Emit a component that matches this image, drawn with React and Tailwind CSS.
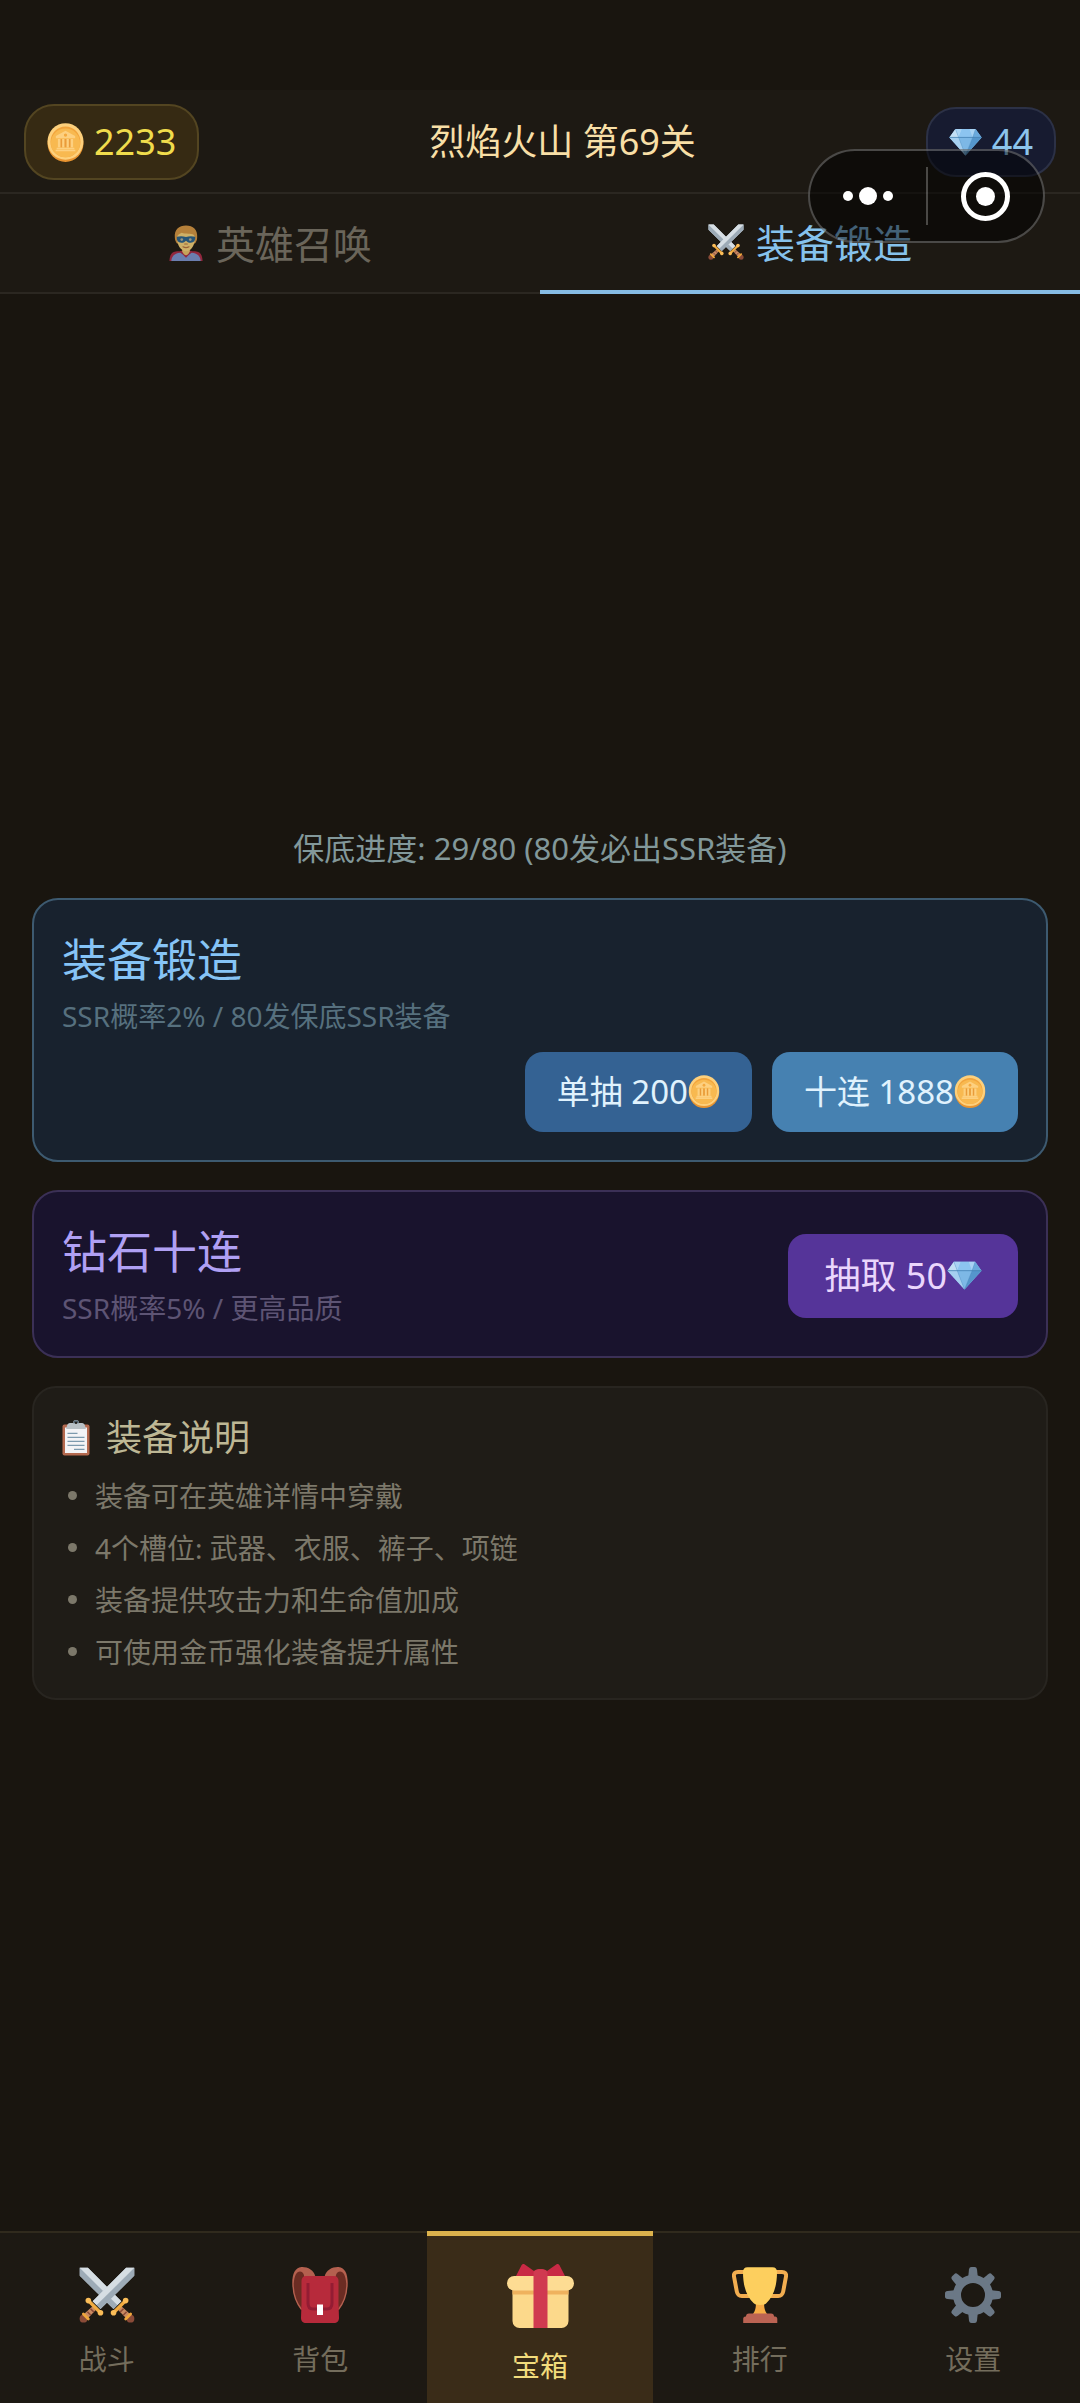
import React, { useState } from "react";

function CoinIcon({ className }) {
  return (
    <svg viewBox="0 0 36 38" className={className} aria-hidden="true">
      <ellipse cx="18" cy="20" rx="17.5" ry="18" fill="#e89430" />
      <ellipse cx="18" cy="18" rx="17.5" ry="17.8" fill="#fdd07c" />
      <ellipse cx="18" cy="18.4" rx="14.6" ry="15" fill="#f2a43c" />
      <ellipse cx="18" cy="19.4" rx="14.2" ry="14" fill="#f8b950" />
      <path d="M18 7.5 8.6 12.6v2.2h18.8v-2.2z" fill="#fdd080" />
      <circle cx="18" cy="11.8" r="1.6" fill="#f4a83e" />
      <path
        d="M10.6 15.6h2.6v8h-2.6zM14.7 15.6h2.4v8h-2.4zM18.9 15.6h2.4v8h-2.4zM22.8 15.6h2.6v8h-2.6zM9.4 24h17.2v1.6H9.4zM8.4 26h19.2v1.6H8.4z"
        fill="#fdd080"
      />
      <path d="M13.2 15.6h1.5v8h-1.5zM17.1 15.6h1.8v8h-1.8zM21.3 15.6h1.5v8h-1.5z" fill="#e99b3a" />
    </svg>
  );
}

function DiamondIcon({ className }) {
  return (
    <svg viewBox="0 0 36 30" className={className} aria-hidden="true">
      <path d="M7 .8h22L35.6 10 18 29.6.4 10z" fill="#8cc4ee" />
      <path d="M7 .8 10.5 10H.4z" fill="#c3dff5" />
      <path d="M7 .8h7.2L10.5 10z" fill="#a9d3f4" />
      <path d="M14.2.8h8.2l3.4 9.2H10.5z" fill="#8cc4f0" />
      <path d="M22.4.8H29L25.8 10z" fill="#a9d3f4" />
      <path d="M29 .8 35.6 10h-9.8z" fill="#6aa9dc" />
      <path d="M.4 10h10.1L18 29.6z" fill="#a5cff0" />
      <path d="M10.5 10h15.3L18 29.6z" fill="#7db8e6" />
      <path d="M25.8 10h9.8L18 29.6z" fill="#5596cc" />
      <path d="M.4 10h35.2" fill="none" stroke="#3f7cae" strokeWidth=".8" />
      <path d="M7 .8 10.500 10 18 29.600 25.800 10 29 .8" fill="none" stroke="#3f7cae" strokeWidth=".3" />
    </svg>
  );
}

function Sword() {
  return (
    <g>
      <path d="M35.5.5v5.200L13.800 27l-5-5L30.300.5z" fill="#c6d0d8" />
      <path d="M35.5.5v5.200L13.800 27l-2.500-2.500z" fill="#9dabb7" />
      <path d="M30.300.5h5.200L11.300 24.500 8.800 22z" fill="#d6dee4" />
      <path d="m8.600 25.400 2.200 2.200-5.400 5.600-2.600-2.600z" fill="#c98a62" />
      <path d="m7.400 26.800 2.200 2.200M5.400 28.800l2.200 2.200" stroke="#8a4b38" strokeWidth="1" />
      <circle cx="2.900" cy="33.200" r="2.500" fill="#8a4b38" />
      <path d="m2.800 30.200 3.200 3.200" stroke="#f0a63c" strokeWidth="1.800" strokeLinecap="round" />
      <path d="m6.200 21.800 7.600 7.600" stroke="#f2ab40" strokeWidth="2.200" strokeLinecap="round" />
      <circle cx="6" cy="21.600" r="1.800" fill="#fbbd58" />
      <circle cx="13.800" cy="29.400" r="1.800" fill="#fbbd58" />
    </g>
  );
}

function SwordsIcon({ className }) {
  return (
    <svg viewBox="0 0 36 36" className={className} aria-hidden="true">
      <g transform="matrix(-1 0 0 1 36 0)">
        <Sword />
      </g>
      <Sword />
    </svg>
  );
}

function HeroIcon({ className }) {
  return (
    <svg viewBox="0 0 36 38" className={className} aria-hidden="true">
      <path d="M.5 38c.4-7 2.600-10 8-10.400h19c5.400.4 7.600 3.400 8 10.400z" fill="#b02b48" />
      <path d="M2.500 38c.2-5 4-8.800 9.500-8.800L18 33l6-3.800c5.500 0 9.300 3.800 9.500 8.800z" fill="#7f98d6" />
      <path d="M11.500 28 18 34.500l6.500-6.500-2.500-1h-8z" fill="#b02b48" />
      <path d="M14 23h8v5c-1 2.500-2.600 4-4 4s-3-1.500-4-4z" fill="#f0c66c" />
      <path d="M6.200 13C5.500 5 10.500.5 18 .5S30.500 5 29.800 13c0 3-1 5-2.300 6.500h-19C7.200 18 6.200 16 6.200 13z" fill="#dc9a44" />
      <path d="M8.500 13.500c0-3 2-4 5-5.300 4 1.300 10 .6 12.500 2 1 .8 1.500 2 1.500 3.500 0 7.500-4 14-9.500 14s-9.500-6.500-9.500-14.200z" fill="#fbd67c" />
      <path d="M8.300 12.500c3.500-1 6.500-.8 9.700.2 3.200-1 6.200-1.200 9.700-.2.300 4-1.400 6.300-4.700 6.300-2.600 0-3.800-.9-5-2.200-1.200 1.300-2.400 2.200-5 2.200-3.300 0-5-2.300-4.700-6.300z" fill="#2a6590" />
      <circle cx="13.500" cy="15.400" r="1.400" fill="#b7b39a" />
      <circle cx="22.500" cy="15.400" r="1.400" fill="#b7b39a" />
      <path d="M16.600 20h2.800M14.800 23c2 1.200 4.400 1.200 6.400 0" stroke="#b87440" strokeWidth="1.200" fill="none" strokeLinecap="round" />
    </svg>
  );
}

function ClipboardIcon({ className }) {
  return (
    <svg viewBox="0 0 28 36" className={className} aria-hidden="true">
      <rect x=".5" y="5" width="27" height="31" rx="2" fill="#b4694f" />
      <path d="M3 8h22v25.500H3z" fill="#f3f3f6" />
      <path d="M14 .5a3 3 0 0 0-3 3h-3c-1.500 0-2.400 1-3 2.500L4.200 9.500h19.600L23 6c-.6-1.500-1.500-2.500-3-2.500h-3a3 3 0 0 0-3-3z" fill="#b9c1c6" />
      <path d="M14 .8a2.800 2.800 0 0 0-2.800 3h5.600A2.800 2.800 0 0 0 14 .8z" fill="#52626f" />
      <circle cx="14" cy="3.400" r="1.100" fill="#211d17" />
      <path d="M5.500 13.800h10M5.500 17.800h17M5.500 21.800h17M5.500 25.800h17M12 29.800h10.500" stroke="#7d9aae" strokeWidth="1.200" />
    </svg>
  );
}

function BackpackIcon({ className }) {
  return (
    <svg viewBox="0 0 56 56" className={className} aria-hidden="true">
      <path d="M11 3C4 2 .5 8 .7 16c.1 10 3.300 20 8.800 27H14V8zM45 3c7-1 10.500 5 10.300 13-.1 10-3.300 20-8.800 27H42V8z" fill="#6b2c23" />
      <path d="M1 16c0 10 3.300 20 8.600 26.500M55 16c0 10-3.300 20-8.600 26.500" fill="none" stroke="#b4604f" strokeWidth="1.400" />
      <path
        d="M23.500 10C22 3 15.500-.2 9.500.1 3 .6.300 7 .3 16h1.500C2.300 9 4.500 4.600 8 4.600c3 .2 4.300 3 4.500 7zM32.500 10C34 3 40.500-.2 46.500.1 53 .6 55.700 7 55.700 16h-1.500C53.700 9 51.500 4.600 48 4.600c-3 .2-4.300 3-4.500 7z"
        fill="#b4604f"
      />
      <path d="M14 9h28c3 0 4.500 2 4.500 5v22l.5 15c0 3-2 5-5 5H14c-3 0-5-2-5-5l.5-15V14c0-3 1.500-5 4.500-5z" fill="#b72a3b" />
      <path d="M16 16v20c0 4 2 6 5 6h14c3 0 5-2 5-6V16" fill="none" stroke="#931c33" strokeWidth="3" />
      <path d="M25 37.500h6V48h-6z" fill="#fff" />
    </svg>
  );
}

function GiftIcon({ className }) {
  return (
    <svg viewBox="0 0 67 64" className={className} aria-hidden="true">
      <path d="M5.500 22h56v35a7 7 0 0 1-7 7h-42a7 7 0 0 1-7-7z" fill="#fcd98b" />
      <path d="M5.500 25h56v5.500h-56z" fill="#efb25e" />
      <rect y="12" width="67" height="14.500" rx="7.200" fill="#fddc93" />
      <path d="M9 12 14.500 1.200c1-1.600 2.400-1.600 3.600-.4L27 7c3-2.600 10-2.600 13 0L48.900.8c1.200-1.200 2.600-1.200 3.600.4L58 12z" fill="#c92a45" />
      <path d="M26.500 9c0-5 14-5 14 0v55h-14z" fill="#d03a50" />
    </svg>
  );
}

function TrophyIcon({ className }) {
  return (
    <svg viewBox="0 0 56 56" className={className} aria-hidden="true">
      <path d="M14 5H6C3 5 1.500 6.500 2 9.500l2.800 15c.6 3 2 4.500 5 4.500H20M42 5h8c3 0 4.500 1.500 4 4.500l-2.800 15c-.6 3-2 4.500-5 4.500H36" fill="none" stroke="#f2ad50" strokeWidth="4" />
      <path d="M24 35h8c0 6 1 9 3 12H21c2-3 3-6 3-12z" fill="#f5ab45" />
      <path d="M15.500.3h25C43.500.3 45 2 45 5c0 15-4 25-10.500 31-1 1.200-3 2-6.500 2s-5.500-.8-6.500-2C15 30 11 20 11 5c0-3 1.500-4.700 4.500-4.700z" fill="#fdcf5e" />
      <path d="M17 46.500h22c2 0 3 1 3 3h1c1.500 0 2.300 1 2.300 2.500V56H11.200v-4c0-1.500.8-2.500 2.300-2.500h.5c0-2 1-3 3-3z" fill="#bb6353" />
    </svg>
  );
}

const TEETH = [0, 45, 90, 135, 180, 225, 270, 315];

function GearIcon({ className }) {
  return (
    <svg viewBox="0 0 56 56" className={className} aria-hidden="true">
      {TEETH.map((angle) => (
        <path key={angle} d="M23 12 24 2.500C24.300.8 25 0 26.500 0h3c1.500 0 2.200.8 2.500 2.500L33 12z" fill="#6b7886" transform={`rotate(${angle} 28 28)`} />
      ))}
      <circle cx="28" cy="28" r="16" fill="none" stroke="#6b7886" strokeWidth="8" />
    </svg>
  );
}

const TABS = [
  { id: "hero", label: "英雄召唤", Icon: HeroIcon },
  { id: "forge", label: "装备锻造", Icon: SwordsIcon },
];

const NOTES = [
  "装备可在英雄详情中穿戴",
  "4个槽位: 武器、衣服、裤子、项链",
  "装备提供攻击力和生命值加成",
  "可使用金币强化装备提升属性",
];

const NAV = [
  { id: "battle", label: "战斗", Icon: SwordsIcon },
  { id: "bag", label: "背包", Icon: BackpackIcon },
  { id: "chest", label: "宝箱", Icon: GiftIcon },
  { id: "rank", label: "排行", Icon: TrophyIcon },
  { id: "settings", label: "设置", Icon: GearIcon },
];

function Capsule() {
  return (
    <div className="absolute right-[35px] top-[149px] flex h-[94px] w-[237px] items-center rounded-full border-2 border-white/25 bg-black/50">
      <button type="button" aria-label="更多" className="flex flex-1 items-center justify-center gap-[6px]">
        <span className="size-[10px] rounded-full bg-white" />
        <span className="size-[18px] rounded-full bg-white" />
        <span className="size-[10px] rounded-full bg-white" />
      </button>
      <span className="h-[58px] w-[2px] bg-white/25" />
      <button type="button" aria-label="关闭" className="flex flex-1 items-center justify-center">
        <span className="flex size-[49px] items-center justify-center rounded-full border-[5px] border-white">
          <span className="size-[19px] rounded-full bg-white" />
        </span>
      </button>
    </div>
  );
}

export default function App() {
  const [tab, setTab] = useState("forge");
  const [page, setPage] = useState("chest");

  return (
    <div className="relative flex min-h-screen flex-col bg-[#19150f] font-['Noto_Sans','Noto_Sans_CJK_SC',sans-serif] text-[36px] leading-none">
      <header className="mt-[90px] flex items-center justify-between border-b-2 border-[#2b2721] bg-[#1d1913] px-6 pb-3 pt-[14px]">
        <div className="flex h-[76px] items-center gap-[10px] rounded-[30px] border-2 border-[#534521] bg-[#362a13] px-[21px] text-[#f0dc4c]">
          <CoinIcon className="h-[39px] w-[37px]" />
          <span>2233</span>
        </div>
        <h1 className="text-[#f8dfa6]">烈焰火山 第69关</h1>
        <div className="flex h-[70px] items-center gap-[10px] rounded-[30px] border-2 border-[#2c3146] bg-[#171b30] px-[21px] text-[#8cc4ec]">
          <DiamondIcon className="h-[28px] w-[33px]" />
          <span>44</span>
        </div>
      </header>

      <div role="tablist" className="flex bg-[#1d1913]">
        {TABS.map(({ id, label, Icon }) => (
          <button
            key={id}
            type="button"
            role="tab"
            aria-selected={tab === id}
            onClick={() => setTab(id)}
            className={`flex h-[100px] flex-1 items-center justify-center gap-3 text-[39px] ${
              tab === id
                ? "border-b-4 border-[#86bce4] text-[#86c2ec]"
                : "border-b-2 border-[#2b2721] text-[#6a655a]"
            }`}
          >
            <Icon className={tab === id ? "size-9" : "size-9 opacity-80"} />
            <span>{label}</span>
          </button>
        ))}
      </div>

      <main className="flex flex-1 flex-col justify-center gap-7 px-8">
        <p className="text-center text-[31px] leading-[44px] text-[#82989a]">
          保底进度: 29/80 (80发必出SSR装备)
        </p>

        <section className="rounded-[26px] border-2 border-[#3d5a70] bg-[#18222e] px-7 pb-7 pt-[30px]">
          <h2 className="text-[45px] leading-[60px] text-[#86c4f6]">装备锻造</h2>
          <p className="mt-1 text-[28px] leading-[44px] text-[#56707e]">SSR概率2% / 80发保底SSR装备</p>
          <div className="mt-[14px] flex justify-end gap-5 text-[33px] text-[#e0f2fd]">
            <button type="button" className="flex h-20 items-center rounded-[18px] bg-[#346293] px-8">
              <span>单抽 200</span>
              <CoinIcon className="h-[33px] w-8" />
            </button>
            <button type="button" className="flex h-20 items-center rounded-[18px] bg-[#4681b1] px-8">
              <span>十连 1888</span>
              <CoinIcon className="h-[33px] w-8" />
            </button>
          </div>
        </section>

        <section className="flex items-center justify-between rounded-[26px] border-2 border-[#3b3056] bg-[#19132d] px-7 pb-[26px] pt-[30px]">
          <div>
            <h2 className="text-[45px] leading-[60px] text-[#b0a0f4]">钻石十连</h2>
            <p className="mt-1 text-[28px] leading-[44px] text-[#5d5474]">SSR概率5% / 更高品质</p>
          </div>
          <button type="button" className="flex h-[84px] items-center rounded-[18px] bg-[#553499] px-9 text-[#ead6fc]">
            <span>抽取 50</span>
            <DiamondIcon className="h-[29px] w-[35px]" />
          </button>
        </section>

        <section className="rounded-[24px] border-2 border-[#282520] bg-[#1f1c17] px-7 pb-5 pt-6">
          <h3 className="flex items-center gap-4 leading-[52px] text-[#bdb795]">
            <ClipboardIcon className="h-[37px] w-7" />
            <span>装备说明</span>
          </h3>
          <ul className="mt-[6px] text-[28px] leading-[52px] text-[#7c786a]">
            {NOTES.map((note) => (
              <li key={note} className="flex items-center gap-[18px] pl-[6px]">
                <span className="size-[9px] rounded-full bg-[#7c786a]" />
                {note}
              </li>
            ))}
          </ul>
        </section>
      </main>

      <nav className="flex h-[172px] bg-[#1d1913]">
        {NAV.map(({ id, label, Icon }) =>
          page === id ? (
            <button
              key={id}
              type="button"
              aria-current="page"
              className="flex grow-[106] basis-0 flex-col items-center gap-5 border-t-[5px] border-[#dcb24c] bg-[#3a2c18] pt-7 text-[28px] leading-9 text-[#f2dc7c]"
            >
              <Icon className="h-16 w-[67px]" />
              <span>{label}</span>
            </button>
          ) : (
            <button
              key={id}
              type="button"
              onClick={() => setPage(id)}
              className="flex grow-[100] basis-0 flex-col items-center gap-[18px] border-t-2 border-[#302a1d] pt-[34px] text-[28px] leading-9 text-[#746d5c]"
            >
              <Icon className="size-14" />
              <span>{label}</span>
            </button>
          )
        )}
      </nav>

      <Capsule />
    </div>
  );
}
